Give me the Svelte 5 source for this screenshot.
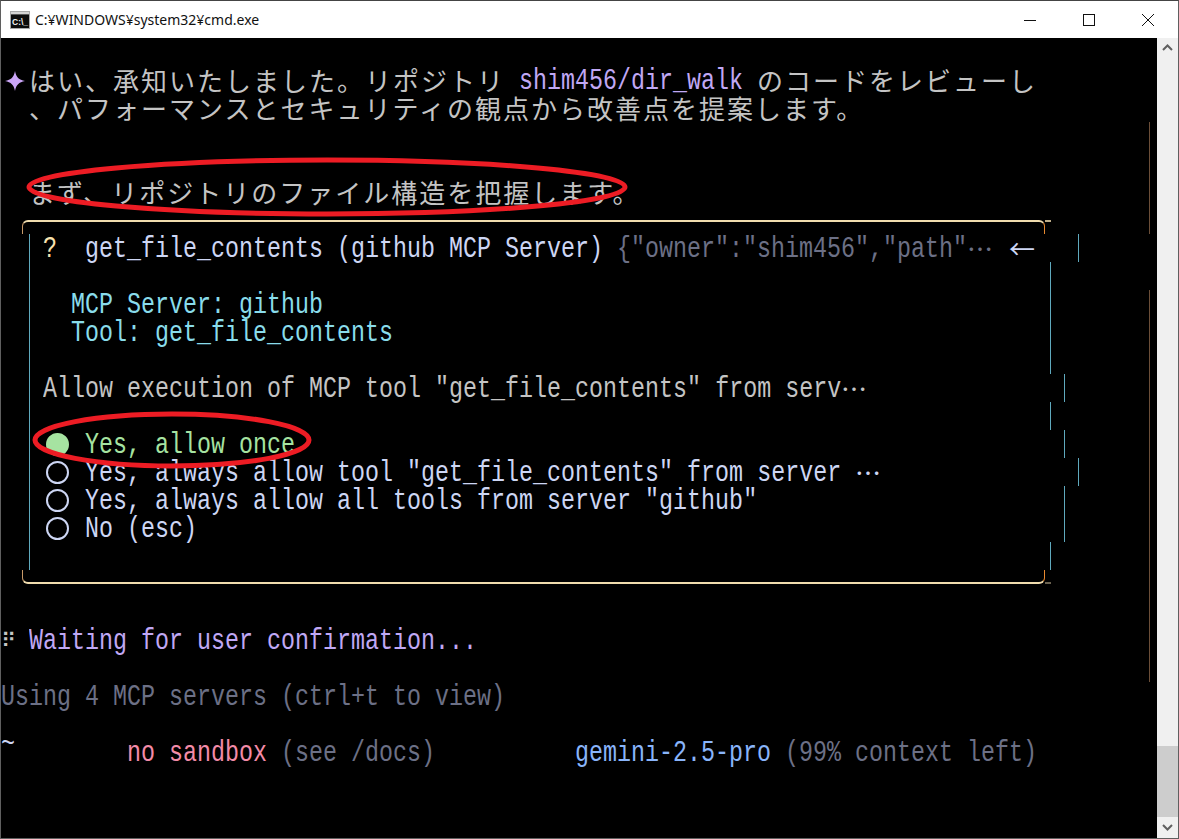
<script lang="ts">
  // Terminal grid: every cell is 14px wide, every row 28px high
  const CELL = 14;

  type Seg = { t: string; c?: string; ja?: boolean };
  type Row = { col?: number; segs?: Seg[]; edge?: number; radio?: 'on' | 'off' };

  const top: Row[] = [
    {},
    {
      col: 0,
      segs: [
        { t: '✦', c: 'star' },
        { t: 'はい、承知いたしました。リポジトリ', ja: true },
        { t: ' shim456/dir_walk ', c: 'purple' },
        { t: 'のコードをレビューし', ja: true }
      ]
    },
    { col: 2, segs: [{ t: '、パフォーマンスとセキュリティの観点から改善点を提案します。', ja: true }] },
    {},
    {},
    { col: 2, segs: [{ t: 'まず、リポジトリのファイル構造を把握します。', ja: true }] }
  ];

  // col is counted from the left rule of the box; edge is where the right rule landed (page x)
  const box: Row[] = [
    {
      col: 1,
      edge: 1078,
      segs: [
        { t: '?', c: 'yellow' },
        { t: '  get_file_contents (github MCP Server) ', c: 'text' },
        { t: '{"owner":"shim456","path"', c: 'gray' },
        { t: '…', c: 'gray', ja: true },
        { t: ' ', c: 'text' },
        { t: '←', c: 'text', ja: true }
      ]
    },
    { edge: 1050 },
    { col: 3, edge: 1050, segs: [{ t: 'MCP Server: github', c: 'teal' }] },
    { col: 3, edge: 1050, segs: [{ t: 'Tool: get_file_contents', c: 'teal' }] },
    { edge: 1050 },
    {
      col: 1,
      edge: 1064,
      segs: [
        { t: 'Allow execution of MCP tool "get_file_contents" from serv', c: 'plain' },
        { t: '…', c: 'plain', ja: true }
      ]
    },
    { edge: 1050 },
    { col: 1, edge: 1064, radio: 'on', segs: [{ t: 'Yes, allow once', c: 'green' }] },
    {
      col: 1,
      edge: 1078,
      radio: 'off',
      segs: [
        { t: 'Yes, always allow tool "get_file_contents" from server ', c: 'text' },
        { t: '…', c: 'text', ja: true }
      ]
    },
    { col: 1, edge: 1064, radio: 'off', segs: [{ t: 'Yes, always allow all tools from server "github"', c: 'text' }] },
    { col: 1, edge: 1064, radio: 'off', segs: [{ t: 'No (esc)', c: 'text' }] },
    { edge: 1050 }
  ];

  const bottom: Row[] = [
    {},
    { col: 0, segs: [{ t: '⠟', c: 'spin' }, { t: ' ', c: 'text' }, { t: 'Waiting for user confirmation...', c: 'purple' }] },
    {},
    { col: 0, segs: [{ t: 'Using 4 MCP servers (ctrl+t to view)', c: 'gray' }] },
    {},
    {
      col: 0,
      segs: [
        { t: '~', c: 'tilde' },
        { t: '        ', c: 'text' },
        { t: 'no sandbox', c: 'pink' },
        { t: ' (see /docs)          ', c: 'gray' },
        { t: 'gemini-2.5-pro', c: 'blue' },
        { t: ' (99% context left)', c: 'gray' }
      ]
    }
  ];

  const cells = (s: Seg) => {
    if (s.c === 'star') return 2;
    return s.t.length * (s.ja ? 2 : 1);
  };
</script>

{#snippet segs(row: Row)}
  {#if row.radio}
    <span class="radio" class:on={row.radio === 'on'}></span>
  {/if}
  {#each row.segs ?? [] as s}
    {#if s.c === 'star'}
      <span class="seg" style:width="{cells(s) * CELL}px">
        <svg class="star-icon" viewBox="0 0 20 20" width="20" height="20" aria-hidden="true">
          <path d="M10 0 C11 6 14 9 20 10 C14 11 11 14 10 20 C9 14 6 11 0 10 C6 9 9 6 10 0 Z" fill="#cba6f7" />
        </svg>
      </span>
    {:else}
      <span class="seg {s.c ?? ''}" class:ja={s.ja} style:width="{cells(s) * CELL}px">
        <span class="inner">{s.t}</span>
      </span>
    {/if}
  {/each}
{/snippet}

<div class="window" lang="ja">
  <header class="titlebar">
    <svg class="app-icon" viewBox="0 0 20 18" width="20" height="18" aria-hidden="true">
      <rect width="20" height="18" fill="#a9a9a9" />
      <rect x="1" y="1" width="18" height="2" fill="#d4d4d4" />
      <rect x="1" y="3.5" width="18" height="13.5" fill="#0c0c0c" />
      <text x="2" y="13.5" font-size="8.5" font-family="Liberation Sans, sans-serif" font-weight="700" fill="#f2f2f2">C:\_</text>
    </svg>
    <span class="title">C:¥WINDOWS¥system32¥cmd.exe</span>
    <div class="controls">
      <span class="ctl"><svg viewBox="0 0 12 12" width="12" height="12" aria-hidden="true"><path d="M0 6.5H12" stroke="#111" fill="none" /></svg></span>
      <span class="ctl"><svg viewBox="0 0 12 12" width="12" height="12" aria-hidden="true"><rect x="0.5" y="0.5" width="11" height="11" stroke="#111" fill="none" /></svg></span>
      <span class="ctl"><svg viewBox="0 0 12 12" width="12" height="12" aria-hidden="true"><path d="M0 0L12 12M12 0L0 12" stroke="#111" fill="none" /></svg></span>
    </div>
  </header>

  <div class="screen">
    <main class="term">
      {#each top as row}
        <div class="row" style:padding-left="{(row.col ?? 0) * CELL}px">{@render segs(row)}</div>
      {/each}

      <div class="cap top-cap">
        <span class="arc"></span>
        <span class="tail"></span>
      </div>
      <div class="box-body">
        {#each box as row}
          <div
            class="row boxed"
            style:padding-left="{(row.col ?? 0) * CELL - 1}px"
            style:width="{(row.edge ?? 1050) - 29}px"
          >
            {@render segs(row)}
          </div>
        {/each}
      </div>
      <div class="cap bottom-cap">
        <span class="arc"></span>
        <span class="tail"></span>
      </div>

      {#each bottom as row}
        <div class="row" style:padding-left="{(row.col ?? 0) * CELL}px">{@render segs(row)}</div>
      {/each}
    </main>

    <div class="trail">
      <span class="trail-a"></span>
      <span class="trail-b"></span>
    </div>

    <aside class="scrollbar">
      <svg viewBox="0 0 21 17" width="21" height="17" aria-hidden="true"><path d="M6 12L10.5 7.5L15 12" stroke="#606060" stroke-width="2" fill="none" /></svg>
      <span class="track"></span>
      <span class="thumb"></span>
      <svg viewBox="0 0 21 21" width="21" height="21" aria-hidden="true"><path d="M6 8L10.5 12.5L15 8" stroke="#606060" stroke-width="2" fill="none" /></svg>
    </aside>

    <!-- red marker drawn over the screenshot -->
    <svg class="marks" viewBox="0 0 1179 801" width="1179" height="801" aria-hidden="true">
      <ellipse cx="327" cy="149" rx="298" ry="27" />
      <ellipse cx="172" cy="402" rx="137" ry="26" />
    </svg>
  </div>
</div>

<style>
  :global(body) {
    margin: 0;
    background: #000;
  }

  .window {
    width: 1179px;
    height: 839px;
    box-sizing: border-box;
    display: flex;
    flex-direction: column;
    border: 1px solid #5f5f5f;
    border-top-color: #444;
    overflow: hidden;
    background: #000;
  }

  .titlebar {
    height: 37px;
    flex: none;
    display: flex;
    align-items: center;
    background: #fff;
    padding-left: 9px;
  }

  .app-icon {
    margin-right: 5px;
    margin-top: 1px;
  }

  .title {
    font-family: "Noto Sans", "Open Sans", sans-serif;
    font-size: 14px;
    letter-spacing: 0;
    color: #111;
  }

  .controls {
    margin-left: auto;
    display: flex;
    align-items: center;
    padding-right: 24px;
    gap: 47px;
  }

  .ctl {
    display: flex;
    width: 12px;
    height: 12px;
  }

  .screen {
    position: relative;
    flex: 1;
    display: flex;
    min-height: 0;
  }

  .term {
    width: 1148px;
    flex: none;
    margin-top: 0;
  }

  .row {
    height: 28px;
    display: flex;
    box-sizing: border-box;
  }

  .seg {
    flex: none;
    display: block;
    box-sizing: border-box;
    height: 28px;
    padding-top: 1px;
    white-space: pre;
    font-family: "Liberation Mono", monospace;
    font-size: 30px;
    line-height: 28px;
    color: #c4c4c4;
  }

  .inner {
    display: block;
    transform: scaleX(0.7778);
    transform-origin: left center;
    -webkit-font-smoothing: antialiased;
  }

  .seg.ja {
    padding-top: 0;
    font-family: "Noto Sans CJK JP", sans-serif;
    font-size: 26px;
    letter-spacing: 2px;
    font-weight: 400;
    color: #c4c4c4;
  }

  .seg.ja .inner {
    transform: none;
  }

  .star-icon {
    display: block;
    margin: 4px 0 0 4px;
  }

  .purple { color: #c0a8f5; }
  .text { color: #cdd6f4; }
  .seg.ja.text { color: #cdd6f4; }
  .gray { color: #6c7086; }
  .seg.ja.gray { color: #6c7086; }
  .plain { color: #c4c4c4; }
  .teal { color: #89dceb; }
  .green { color: #a6e3a1; }
  .yellow { color: #f9e2af; }
  .pink { color: #f38ba8; }
  .blue { color: #89b4fa; }

  .spin {
    font-family: "DejaVu Sans", sans-serif;
    font-size: 21px;
  }

  .spin .inner {
    transform: none;
  }

  /* the tilde sits high in the cell in the console font */
  .tilde {
    color: #cdd6f4;
  }

  .tilde .inner {
    transform: translateY(-9px) scaleX(0.7778);
  }

  .cap {
    height: 28px;
    box-sizing: border-box;
    margin-left: 21px;
    width: 1029px;
    display: flex;
  }

  .top-cap {
    padding-top: 14px;
  }

  .bottom-cap {
    padding-bottom: 14px;
  }

  .arc {
    width: 1023px;
    height: 14px;
    box-sizing: border-box;
    border: 0 solid #f0dcae;
    border-left: 1px solid #c99a68;
    border-right: 1px solid #e8892f;
    flex: none;
  }

  .top-cap .arc {
    border-top-width: 2px;
    border-radius: 6px 6px 0 0;
  }

  .bottom-cap .arc {
    border-bottom-width: 2px;
    border-radius: 0 0 6px 6px;
  }

  .tail {
    width: 6px;
    height: 2px;
    background: #bfae88;
  }

  .bottom-cap .tail {
    margin-top: 12px;
    background: #6b6250;
  }

  .box-body {
    margin-left: 28px;
    width: 1120px;
    border-left: 1px solid #5fa9bd;
  }

  .row.boxed {
    border-right: 1px solid #5fa9bd;
  }

  .radio {
    flex: none;
    width: 23px;
    height: 23px;
    box-sizing: border-box;
    border: 2.5px solid #cdd6f4;
    border-radius: 50%;
    margin: 3px 16px 0 3px;
  }

  .radio.on {
    background: #a6e3a1;
    border-color: #a6e3a1;
  }

  .trail {
    width: 1px;
    flex: none;
    display: flex;
    flex-direction: column;
  }

  .trail-a,
  .trail-b {
    display: block;
    background: #6b4e38;
  }

  .trail-a {
    margin-top: 84px;
    height: 112px;
  }

  .trail-b {
    margin-top: 56px;
    height: 392px;
  }

  .scrollbar {
    margin-left: 7px;
    width: 21px;
    flex: none;
    display: flex;
    flex-direction: column;
    background: #f0f0f0;
  }

  .scrollbar svg {
    flex: none;
    display: block;
  }

  .track {
    flex: 1;
  }

  .thumb {
    flex: none;
    height: 71px;
    background: #cdcdcd;
  }

  .marks {
    position: absolute;
    left: -1px;
    top: 0;
    pointer-events: none;
  }

  .marks ellipse {
    fill: none;
    stroke: #ed1c24;
    stroke-width: 5;
  }
</style>
